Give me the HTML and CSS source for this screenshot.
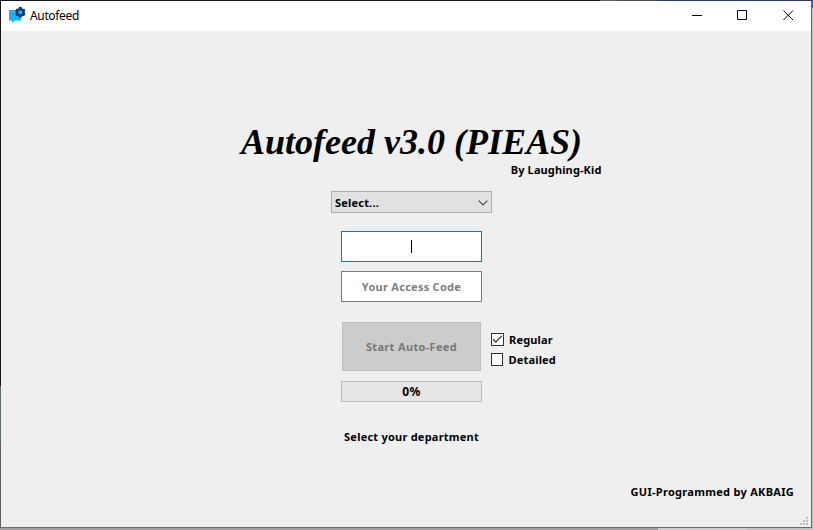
FILE: index.html
```
<!DOCTYPE html>
<html lang="en">
<head>
<meta charset="utf-8">
<title>Autofeed</title>
<link rel="stylesheet" href="styles.css">
</head>
<body>
<div class="desktop">
  <div class="window">
    <header class="titlebar">
      <svg class="app-icon" width="17" height="17" viewBox="0 0 17 17">
        <path d="M0 3h12v10.500H6l-3 2.500v-2.500H0z" fill="#14b4fc"/>
        <g fill="#0b3b69"><circle cx="11.300" cy="5.300" r="4.400"/>
        <path d="M9.800 0h3v10.600h-3zM6 4 7.500 1.400l9.100 5.300-1.500 2.600zM15.100 1.400 16.600 4l-9.100 5.300L6 6.700z"/></g>
        <circle cx="11.300" cy="5.300" r="2" fill="#14b4fc"/>
      </svg>
      <span class="caption">Autofeed</span>
      <nav class="controls">
        <svg width="46" height="30" viewBox="0 0 46 30"><path d="M18 14.500h10"/></svg>
        <svg width="46" height="30" viewBox="0 0 46 30"><path d="M17.500 9.500h9v9h-9z"/></svg>
        <svg width="46" height="30" viewBox="0 0 46 30"><path d="m17.500 9.500 9.500 9.500m0-9.500-9.500 9.500"/></svg>
      </nav>
    </header>
    <main class="content">
      <h1 class="title"><span>Autofeed v3.0 (PIEAS)</span></h1>
      <p class="byline"><span class="t-by">By Laughing-Kid</span></p>
      <div class="select"><span class="t-select">Select...</span>
        <svg width="10" height="6" viewBox="0 0 10 6"><path d="m.700.700 4.300 4.200L9.300.700"/></svg>
      </div>
      <div class="field focused"><i class="caret"></i></div>
      <div class="field code"><span class="t-code">Your Access Code</span></div>
      <div class="actions">
        <button class="start" disabled><span class="t-start">Start Auto-Feed</span></button>
        <div class="options">
          <label class="option"><span class="box"><svg width="11" height="11" viewBox="0 0 11 11"><path d="m1 5.300 2.800 2.700L9.700 2"/></svg></span><span class="t-option">Regular</span></label>
          <label class="option"><span class="box"></span><span class="t-option">Detailed</span></label>
        </div>
      </div>
      <div class="progress"><span class="t-percent">0%</span></div>
      <p class="status"><span class="t-status">Select your department</span></p>
      <footer class="credit"><span class="t-credit">GUI-Programmed by AKBAIG</span></footer>
      <svg class="grip" width="8" height="8" viewBox="0 0 8 8"><path d="M6 0h2v2H6zM3 3h2v2H3zM6 3h2v2H6zM0 6h2v2H0zM3 6h2v2H3zM6 6h2v2H6z"/></svg>
    </main>
  </div>
</div>
</body>
</html>
```
FILE: styles.css
```
* { box-sizing: border-box; }
body { margin: 0; }
h1, p { margin: 0; }
.desktop {
  width: 813px;
  height: 530px;
  overflow: hidden;
  background:
    linear-gradient(#2255c4, #2255c4) 812px 0 / 1px 8px no-repeat,
    linear-gradient(#c0c0c0, #c0c0c0) 812px 8px / 1px 522px no-repeat,
    linear-gradient(90deg, #a0a0a0 658px, #cdcdcd 658px 746px, #c2c2c2 746px);
}
.window {
  display: flex;
  flex-direction: column;
  width: 812px;
  height: 528px;
  padding: 1px;
  background:
    linear-gradient(90deg, #17141a 600px, #606060 600px 617px, #4c4a4c 617px 658px, #2b3b63 658px) 0 0 / 100% 1px no-repeat,
    linear-gradient(#17141a 386px, #587158 386px 442px, #606060 442px) 0 0 / 1px 100% no-repeat,
    #6b6b6b;
}
.titlebar {
  display: flex;
  align-items: center;
  height: 30px;
  padding-left: 8px;
  background: #fff;
}
.app-icon { margin-top: -1px; }
.caption {
  margin-left: 4px;
  font: 12px/16px "Noto Sans", sans-serif;
  letter-spacing: -0.35px;
  color: #000;
}
.controls { display: flex; margin: 0 -1px 0 auto; }
.controls svg { fill: none; stroke: #000; stroke-width: 1; }
.content {
  position: relative;
  display: flex;
  flex: 1;
  flex-direction: column;
  align-items: center;
  padding: 91px 0 0 11px;
  background: #efefef;
  color: #000;
  font: bold 11px/16px "Noto Sans", sans-serif;
}
.content span { white-space: nowrap; }
.title {
  height: 40px;
  font: italic bold 36px/41px "Liberation Serif", serif;
}
.byline { width: 380px; height: 16px; text-align: right; }
.t-by { letter-spacing: 0.12px; }
.t-select { padding-top: 2px; letter-spacing: 0.2px; }
.t-code { letter-spacing: 0.27px; }
.t-start { letter-spacing: 0.34px; }
.t-option { padding-top: 2px; letter-spacing: 0.18px; }
.t-percent { font-size: 12px; letter-spacing: 0.3px; }
.t-status { letter-spacing: 0.23px; }
.t-credit { letter-spacing: 0.29px; }
.select {
  display: flex;
  align-items: center;
  justify-content: space-between;
  width: 161px;
  height: 22px;
  margin-top: 13px;
  padding: 0 3px;
  border: 1px solid #adadad;
  background: #e1e1e1;
}
.select svg { margin-top: 1px; fill: none; stroke: #444; stroke-width: 1.1; }
.field {
  display: flex;
  align-items: center;
  justify-content: center;
  width: 141px;
  height: 31px;
  border: 1px solid #7a7a7a;
  background: #fff;
  color: #808080;
}
.focused { margin-top: 18px; border-color: #0078d7; }
.code { margin-top: 9px; }
.caret { width: 1px; height: 13px; background: #000; }
.actions {
  display: grid;
  grid-template-columns: 139px 65px;
  column-gap: 10px;
  width: 139px;
  height: 49px;
  margin-top: 20px;
}
.start {
  padding: 0;
  border: 1px solid #bfbfbf;
  background: #ccc;
  color: #787878;
  font: inherit;
}
.options { display: flex; flex-direction: column; gap: 4px; padding-top: 9px; }
.option { display: flex; align-items: center; gap: 5px; height: 16px; }
.box {
  width: 13px;
  height: 13px;
  border: 1px solid #333;
  background: #fff;
}
.box svg { display: block; fill: none; stroke: #444; stroke-width: 1.3; }
.progress {
  display: flex;
  align-items: center;
  justify-content: center;
  width: 141px;
  height: 21px;
  margin-top: 10px;
  border: 1px solid #bcbcbc;
  background: #e6e6e6;
}
.status { margin-top: 27px; }
.credit { align-self: flex-end; margin: 39px 17px 0 0; }
.grip { position: absolute; right: 3px; bottom: 2px; fill: #bfbfbf; }
```
